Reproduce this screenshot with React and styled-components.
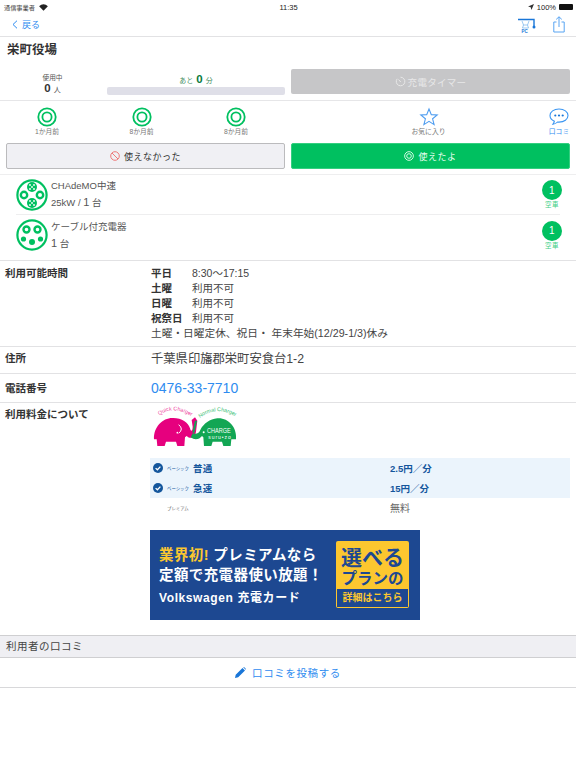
import React from "react";
import styled, { createGlobalStyle } from "styled-components";

const BLUE = "#2f8cf0";
const GREEN = "#00c060";

const Global = createGlobalStyle`
  html, body { margin: 0; padding: 0; background: #fff; }
  body {
    font-family: "Liberation Sans", "Noto Sans CJK JP", sans-serif;
    color: #333;
    width: 576px;
    overflow-x: hidden;
  }
  * { box-sizing: border-box; }
`;

const Page = styled.div`
  width: 576px;
  height: 768px;
  overflow: hidden;
  background: #fff;
`;

const StatusBar = styled.div`
  height: 14px;
  display: grid;
  grid-template-columns: 1fr auto 1fr;
  align-items: center;
  padding: 0 3px 0 4px;
  font-size: 7.5px;
  color: #222;
`;

const StatusLeft = styled.div`
  display: flex;
  align-items: center;
  gap: 4px;
  color: #444;
  font-size: 6.2px;
`;

const StatusRight = styled.div`
  display: flex;
  align-items: center;
  justify-content: flex-end;
  gap: 3px;
`;

const Battery = styled.span`
  width: 14px;
  height: 6px;
  background: #111;
  border-radius: 1px;
`;

const NavBar = styled.div`
  height: 23px;
  display: flex;
  align-items: center;
  justify-content: space-between;
  padding: 0 11px 2px 12px;
  border-bottom: 1px solid #e2e2e4;
`;

const BackLink = styled.div`
  display: flex;
  align-items: center;
  gap: 4px;
  color: ${BLUE};
  font-size: 9px;
`;

const NavIcons = styled.div`
  display: flex;
  align-items: center;
  gap: 17px;
`;

const Title = styled.h1`
  margin: 0;
  height: 29px;
  padding: 5px 7px 0;
  font-size: 12.5px;
  line-height: 16px;
  font-weight: 700;
  color: #333;
`;

const StatsRow = styled.div`
  height: 35px;
  display: flex;
  align-items: flex-start;
  border-bottom: 1px solid #e6e6e8;
`;

const InUse = styled.div`
  width: 105px;
  margin-right: 2px;
  text-align: center;
  color: #555;
  font-size: 6.7px;
  line-height: 9px;
  padding-top: 7px;
`;

const InUseCount = styled.div`
  font-size: 7px;
  line-height: 12px;
  b {
    font-size: 11.5px;
    color: #333;
    margin-right: 3px;
  }
`;

const Remaining = styled.div`
  width: 178px;
  text-align: center;
  color: #3c8a5c;
  font-size: 7px;
  line-height: 12px;
  padding-top: 7px;
  b {
    font-size: 11.5px;
    color: #0a7a3c;
    margin: 0 3px;
  }
`;

const ProgressBar = styled.div`
  height: 8px;
  background: #dfdfe8;
  border-radius: 2px;
`;

const TimerButton = styled.div`
  width: 279px;
  height: 25px;
  margin: 3px 0 0 6px;
  border-radius: 2px;
  background: #c6c6c8;
  color: #e8e8e8;
  font-size: 9.5px;
  letter-spacing: 0.3px;
  display: flex;
  align-items: center;
  justify-content: center;
  gap: 2px;
`;

const ReviewRow = styled.div`
  height: 40px;
  display: flex;
  padding-top: 6px;
`;

const ReviewCell = styled.div`
  width: ${(p) => p.$w}px;
  padding-left: ${(p) => p.$pad || 0}px;
  display: flex;
  flex-direction: column;
  align-items: center;
  font-size: 6.8px;
  line-height: 9px;
  color: ${(p) => (p.$link ? BLUE : "#777")};
`;

const ButtonRow = styled.div`
  height: 34px;
  display: flex;
  gap: 6px;
  padding: 2px 6px 0;
  border-bottom: 1px solid #eeeeef;
`;

const ActionButton = styled.div`
  flex: 1;
  height: 26px;
  border-radius: 2px;
  display: flex;
  align-items: center;
  justify-content: center;
  gap: 4px;
  font-size: 9px;
  letter-spacing: 0.5px;
  background: ${(p) => (p.$primary ? GREEN : "#f0f0f4")};
  color: ${(p) => (p.$primary ? "#e6fff0" : "#333")};
  border: 1px solid ${(p) => (p.$primary ? "#34cf80" : "#bbbbbd")};
`;

const ConnectorList = styled.div`
  padding: 0 16px 5px;
  border-bottom: 1px solid #e2e2e4;
`;

const ConnectorRow = styled.div`
  height: 39px;
  display: flex;
  align-items: center;
  gap: 3px;
  & + & {
    border-top: 1px solid #eeeeef;
    height: 41px;
  }
`;

const ConnectorText = styled.div`
  flex: 1;
  font-size: 9.5px;
  line-height: 16px;
  color: #555;
`;

const ConnectorCount = styled.span`
  font-size: 11px;
`;

const Vacancy = styled.div`
  width: 20px;
  margin-right: -2px;
  display: flex;
  flex-direction: column;
  align-items: center;
  font-size: 6.5px;
  line-height: 9px;
  letter-spacing: 0.6px;
  color: #3fcf85;
`;

const VacancyBadge = styled.div`
  width: 20px;
  height: 20px;
  border-radius: 50%;
  background: ${GREEN};
  color: #fff;
  font-size: 10px;
  display: flex;
  align-items: center;
  justify-content: center;
`;

const InfoRow = styled.div`
  display: grid;
  grid-template-columns: 150px 1fr;
  padding-left: 5px;
  height: ${(p) => p.$h}px;
  border-bottom: ${(p) => (p.$last ? "none" : "1px solid #e2e2e4")};
`;

const InfoLabel = styled.div`
  font-size: 10.5px;
  font-weight: 700;
  color: #333;
  padding-top: ${(p) => p.$top}px;
  margin-right: -5px;
`;

const InfoValue = styled.div`
  padding-top: ${(p) => p.$top || 5}px;
  margin-left: ${(p) => p.$left ?? -4}px;
  font-size: ${(p) => p.$size || 10.7}px;
  line-height: 15px;
  color: ${(p) => p.$color || "#444"};
  min-width: 0;
`;

const HoursGrid = styled.div`
  display: grid;
  grid-template-columns: 41px 1fr;
  font-size: 10.5px;
  b {
    color: #333;
  }
`;

const LogoBox = styled.div`
  height: 47px;
  margin-top: -1px;
`;

const FeeBlock = styled.div`
  margin: 6px 6px 0 0;
  background: #ebf4fc;
`;

const FeeRow = styled.div`
  height: 20px;
  display: grid;
  grid-template-columns: 240px 1fr;
  align-items: center;
  font-size: 9.5px;
  font-weight: 700;
  color: #14569c;
  background: ${(p) => (p.$plain ? "#fff" : "transparent")};
  ${(p) => p.$plain && "color: #666; font-weight: 400; font-size: 10px;"}
`;

const FeeName = styled.div`
  display: flex;
  align-items: center;
  gap: 4px;
  padding-left: 3px;
  letter-spacing: 0.3px;
`;

const FeeSmall = styled.span`
  font-size: 4.4px;
  font-weight: 400;
  color: ${(p) => p.$color || "#14569c"};
  letter-spacing: 0;
`;

const CheckSpacer = styled.span`
  width: 10px;
`;

const Banner = styled.div`
  margin-top: 12px;
  width: 270px;
  height: 90px;
  background: #1d4891;
  color: #fff;
  display: flex;
  align-items: center;
  padding: 0 11px 0 9px;
  justify-content: space-between;
  font-weight: 700;
`;

const BannerText = styled.div`
  font-size: 14.5px;
  line-height: 20px;
  white-space: nowrap;
  letter-spacing: 0.4px;
`;

const BannerCard = styled.div`
  font-size: 12px;
  line-height: 16px;
  margin-top: 5px;
  letter-spacing: 0.6px;
`;

const Accent = styled.span`
  color: #fcc72f;
`;

const BannerBox = styled.div`
  width: 73px;
  height: 67px;
  margin-top: -2px;
  background: #fcc72f;
  border-radius: 2px;
  color: #1d4891;
  text-align: center;
  padding-top: 5px;
  display: flex;
  flex-direction: column;
  overflow: hidden;
  white-space: nowrap;
`;

const BannerBoxLine = styled.div`
  font-size: ${(p) => p.$size}px;
  line-height: ${(p) => p.$line}px;
`;

const BannerBoxFoot = styled.div`
  margin: auto 1px 1px;
  height: 18px;
  background: #1d4891;
  color: #fcc72f;
  font-size: 10px;
  line-height: 18px;
`;

const SectionHeader = styled.div`
  height: 23px;
  background: #efeff3;
  border-top: 1px solid #cfcfd1;
  border-bottom: 1px solid #cfcfd1;
  padding-left: 6px;
  font-size: 10.5px;
  line-height: 21px;
  letter-spacing: 0.5px;
  color: #444;
`;

const PostLink = styled.div`
  height: 30px;
  border-bottom: 1px solid #d8d8da;
  display: flex;
  align-items: center;
  justify-content: center;
  gap: 6px;
  color: ${BLUE};
  font-size: 10.5px;
  letter-spacing: 0.6px;
`;

const Rings = ({ size = 20, color = GREEN }) => (
  <svg width={size} height={size} viewBox="0 0 20 20" fill="none" stroke={color}>
    <circle cx="10" cy="10" r="8.7" strokeWidth="1.8" />
    <circle cx="10" cy="10" r="4.6" strokeWidth="1.8" />
  </svg>
);

const Check = () => (
  <svg width="10" height="10" viewBox="0 0 10 10">
    <circle cx="5" cy="5" r="5" fill="#14569c" />
    <path d="M2.6 5.1 4.4 6.8 7.4 3.6" fill="none" stroke="#fff" strokeWidth="1.3" />
  </svg>
);

const ChademoIcon = () => (
  <svg width="32" height="32" viewBox="0 0 32 32" fill="none">
    <circle cx="16" cy="16" r="14.6" stroke={GREEN} strokeWidth="2.2" />
    <circle cx="8" cy="16" r="3.2" stroke={GREEN} strokeWidth="2.4" />
    <circle cx="24" cy="16" r="3.2" stroke={GREEN} strokeWidth="2.4" />
    <circle cx="16" cy="8" r="5" fill={GREEN} />
    <circle cx="16" cy="24" r="5" fill={GREEN} />
    {[[-2, -2], [2, -2], [-2, 2], [2, 2], [0, 0]].flatMap(([x, y], i) => [
      <circle key={`a${i}`} cx={16 + x} cy={8 + y} r="0.9" fill="#fff" />,
      <circle key={`b${i}`} cx={16 + x} cy={24 + y} r="0.9" fill="#fff" />,
    ])}
  </svg>
);

const Type1Icon = () => (
  <svg width="32" height="32" viewBox="0 0 32 32" fill="none">
    <circle cx="16" cy="16" r="14.6" stroke={GREEN} strokeWidth="2.2" />
    <circle cx="10.5" cy="10.5" r="3" stroke={GREEN} strokeWidth="2.4" />
    <circle cx="21.5" cy="10.5" r="3" stroke={GREEN} strokeWidth="2.4" />
    <circle cx="7.5" cy="20" r="2.6" fill={GREEN} />
    <circle cx="24.5" cy="20" r="2.6" fill={GREEN} />
    <circle cx="16" cy="23" r="3" fill={GREEN} />
  </svg>
);

// drawn in the coordinates of the 3x crop of the logo
const Elephants = () => (
  <svg width="90" height="44" viewBox="30 15 270 132">
    <defs>
      <path id="arcL" d="M58 46 Q100 14 156 50" />
      <path id="arcR" d="M180 54 Q230 14 290 52" />
    </defs>
    <text fontSize="16" fill="#ee4a9f" fontFamily="Liberation Sans, sans-serif">
      <textPath href="#arcL">Quick Charger</textPath>
    </text>
    <text fontSize="16" fill="#35bd72" fontFamily="Liberation Sans, sans-serif">
      <textPath href="#arcR">Normal Charger</textPath>
    </text>
    <path
      d="M42 118C40 80 70 52 100 54 125 54 145 68 150 85 152 95 158 95 158 80L155 60 165 52 172 62 168 95C165 115 150 118 140 108L135 112 133 138H112L108 125H78L74 138H52L50 118Z"
      fill="#e6007e"
    />
    <path
      d="M288 118C292 80 262 52 232 55 210 57 190 72 182 88 178 100 168 104 158 100L152 112C165 122 178 118 186 108L190 112 192 138H214L218 125H246L250 138H272L274 118Z"
      fill="#12a654"
    />
    <path d="M168 62 160 98" stroke="#12a654" strokeWidth="6" fill="none" />
    <path d="M116 74Q132 87 116 100" fill="none" stroke="#fff" strokeWidth="3" />
    <circle cx="112" cy="98" r="2.5" fill="#fff" />
    <circle cx="191" cy="97" r="3" fill="#fff" />
    <text x="201" y="99" fontSize="21" textLength="71" lengthAdjust="spacingAndGlyphs" fill="#fff" fontFamily="Liberation Sans, sans-serif">
      CHARGE
    </text>
    <text x="205" y="117" fontSize="15" textLength="67" fill="#fff" fontFamily="Liberation Sans, sans-serif">
      suru•zo
    </text>
  </svg>
);

const App = () => (
  <Page>
    <Global />
    <StatusBar>
      <StatusLeft>
        通信事業者
        <svg width="9" height="7" viewBox="0 0 10 8">
          <path d="M5 7.6 0 2.6C3-.6 7-.6 10 2.6Z" fill="#222" />
        </svg>
      </StatusLeft>
      <span>11:35</span>
      <StatusRight>
        <svg width="6" height="6" viewBox="0 0 8 8">
          <path d="M8 0 0 3.4 3.6 4.4 4.6 8Z" fill="#333" />
        </svg>
        100%
        <Battery />
      </StatusRight>
    </StatusBar>

    <NavBar>
      <BackLink>
        <svg width="6" height="9" viewBox="0 0 6 9" fill="none" stroke={BLUE} strokeWidth="1">
          <path d="M5 .7 1 4.5 5 8.3" />
        </svg>
        戻る
      </BackLink>
      <NavIcons>
        <svg width="18" height="17" viewBox="0 0 18 17" fill="none" stroke="#1976d8">
          <path d="M0 3.500H16V10" strokeWidth="1.4" />
          <circle cx="16" cy="11" r="1.500" fill="#1976d8" stroke="none" />
          <path d="M4 5 5.500 9H9.500L11 5M5.500 9 4.500 12H10.500L9.500 9" strokeWidth="0.6" stroke="#5aa4ea" />
          <text x="3.500" y="16.500" fontSize="4.500" fill="#1976d8" stroke="none" fontWeight="700">PC</text>
        </svg>
        <svg width="12" height="17" viewBox="0 0 12 17" fill="none" stroke="#58a4f2" strokeWidth="1">
          <path d="M3.500 6H.8V16H11.200V6H8.500" />
          <path d="M6 11V.8M3.200 3.400 6 .8 8.800 3.400" />
        </svg>
      </NavIcons>
    </NavBar>

    <Title>栄町役場</Title>

    <StatsRow>
      <InUse>
        使用中
        <InUseCount>
          <b>0</b>人
        </InUseCount>
      </InUse>
      <Remaining>
        あと<b>0</b>分
        <ProgressBar />
      </Remaining>
      <TimerButton>
        <svg width="11" height="11" viewBox="0 0 11 11" fill="none" stroke="#e8e8e8" strokeWidth="1">
          <path d="M5.500 1.200A4.300 4.300 0 1 1 2.200 2.800" />
          <path d="M3.500 3.500 5.800 6" />
        </svg>
        充電タイマー
      </TimerButton>
    </StatsRow>

    <ReviewRow>
      <ReviewCell $w={94}>
        <Rings />
        1か月前
      </ReviewCell>
      <ReviewCell $w={95}>
        <Rings />
        8か月前
      </ReviewCell>
      <ReviewCell $w={94}>
        <Rings />
        8か月前
      </ReviewCell>
      <ReviewCell $w={259} $pad={32}>
        <svg width="20" height="20" viewBox="0 0 20 20" fill="none" stroke="#4f9df0" strokeWidth="1.100">
          <path d="M10 2 12.300 7.600 18.200 8 13.600 11.800 15.100 17.600 10 14.400 4.900 17.600 6.400 11.800 1.800 8 7.700 7.600Z" />
        </svg>
        お気に入り
      </ReviewCell>
      <ReviewCell $w={34} $link>
        <svg width="20" height="20" viewBox="0 0 20 19" fill="none">
          <path
            d="M10 1.500C4.800 1.500 1 4.300 1 8c0 2.500 1.700 4.600 4.400 5.700-.2 1.300-.8 2.200-1.400 3 1.800-.2 3.400-1 4.500-2.200.5.100 1 .1 1.500.1 5.200 0 9-2.900 9-6.600S15.200 1.500 10 1.500Z"
            stroke="#3b96f2"
            strokeWidth="1.100"
          />
          <circle cx="6.300" cy="8" r="1.100" fill="#1976d8" />
          <circle cx="10" cy="8" r="1.100" fill="#1976d8" />
          <circle cx="13.700" cy="8" r="1.100" fill="#1976d8" />
        </svg>
        口コミ
      </ReviewCell>
    </ReviewRow>

    <ButtonRow>
      <ActionButton>
        <svg width="10" height="10" viewBox="0 0 10 10" fill="none" stroke="#ee7a7a" strokeWidth="1">
          <circle cx="5" cy="5" r="4.300" />
          <path d="M2 2 8 8" />
        </svg>
        使えなかった
      </ActionButton>
      <ActionButton $primary>
        <Rings size={10} color="#e6fff0" />
        使えたよ
      </ActionButton>
    </ButtonRow>

    <ConnectorList>
      <ConnectorRow>
        <ChademoIcon />
        <ConnectorText>
          CHAdeMO中速
          <br />
          25kW / <ConnectorCount>1</ConnectorCount> 台
        </ConnectorText>
        <Vacancy>
          <VacancyBadge>1</VacancyBadge>
          空車
        </Vacancy>
      </ConnectorRow>
      <ConnectorRow>
        <Type1Icon />
        <ConnectorText>
          ケーブル付充電器
          <br />
          <ConnectorCount>1</ConnectorCount> 台
        </ConnectorText>
        <Vacancy>
          <VacancyBadge>1</VacancyBadge>
          空車
        </Vacancy>
      </ConnectorRow>
    </ConnectorList>

    <InfoRow $h={86}>
      <InfoLabel $top={4}>利用可能時間</InfoLabel>
      <InfoValue>
        <HoursGrid>
          <b>平日</b>
          <span>8:30〜17:15</span>
          <b>土曜</b>
          <span>利用不可</span>
          <b>日曜</b>
          <span>利用不可</span>
          <b>祝祭日</b>
          <span>利用不可</span>
        </HoursGrid>
        土曜・日曜定休、祝日・ 年末年始(12/29-1/3)休み
      </InfoValue>
    </InfoRow>
    <InfoRow $h={27}>
      <InfoLabel $top={3}>住所</InfoLabel>
      <InfoValue $size={12.3}>千葉県印旛郡栄町安食台1-2</InfoValue>
    </InfoRow>
    <InfoRow $h={29}>
      <InfoLabel $top={6}>電話番号</InfoLabel>
      <InfoValue $size={14} $color={BLUE} $top={7}>
        0476-33-7710
      </InfoValue>
    </InfoRow>
    <InfoRow $h={232} $last>
      <InfoLabel $top={3}>利用料金について</InfoLabel>
      <InfoValue $top={3} $left={-5}>
        <LogoBox>
          <Elephants />
        </LogoBox>
        <FeeBlock>
          <FeeRow>
            <FeeName>
              <Check />
              <FeeSmall>ベーシック</FeeSmall>
              普通
            </FeeName>
            2.5円／分
          </FeeRow>
          <FeeRow>
            <FeeName>
              <Check />
              <FeeSmall>ベーシック</FeeSmall>
              急速
            </FeeName>
            15円／分
          </FeeRow>
          <FeeRow $plain>
            <FeeName>
              <CheckSpacer />
              <FeeSmall $color="#666">プレミアム</FeeSmall>
            </FeeName>
            無料
          </FeeRow>
        </FeeBlock>
        <Banner>
          <div>
            <BannerText>
              <Accent>業界初!</Accent> プレミアムなら
              <br />
              定額で充電器使い放題！
            </BannerText>
            <BannerCard>Volkswagen 充電カード</BannerCard>
          </div>
          <BannerBox>
            <BannerBoxLine $size={21} $line={23}>選べる</BannerBoxLine>
            <BannerBoxLine $size={15.5} $line={19}>プランの</BannerBoxLine>
            <BannerBoxFoot>詳細はこちら</BannerBoxFoot>
          </BannerBox>
        </Banner>
      </InfoValue>
    </InfoRow>

    <SectionHeader>利用者の口コミ</SectionHeader>
    <PostLink>
      <svg width="11" height="11" viewBox="0 0 11 11" fill="#1976d8">
        <path d="M0 11 .7 7.800 7.500 1 10 3.500 3.200 10.300ZM8.200.3 9 0 11 2 10.700 2.800Z" />
      </svg>
      口コミを投稿する
    </PostLink>
  </Page>
);

export default App;
